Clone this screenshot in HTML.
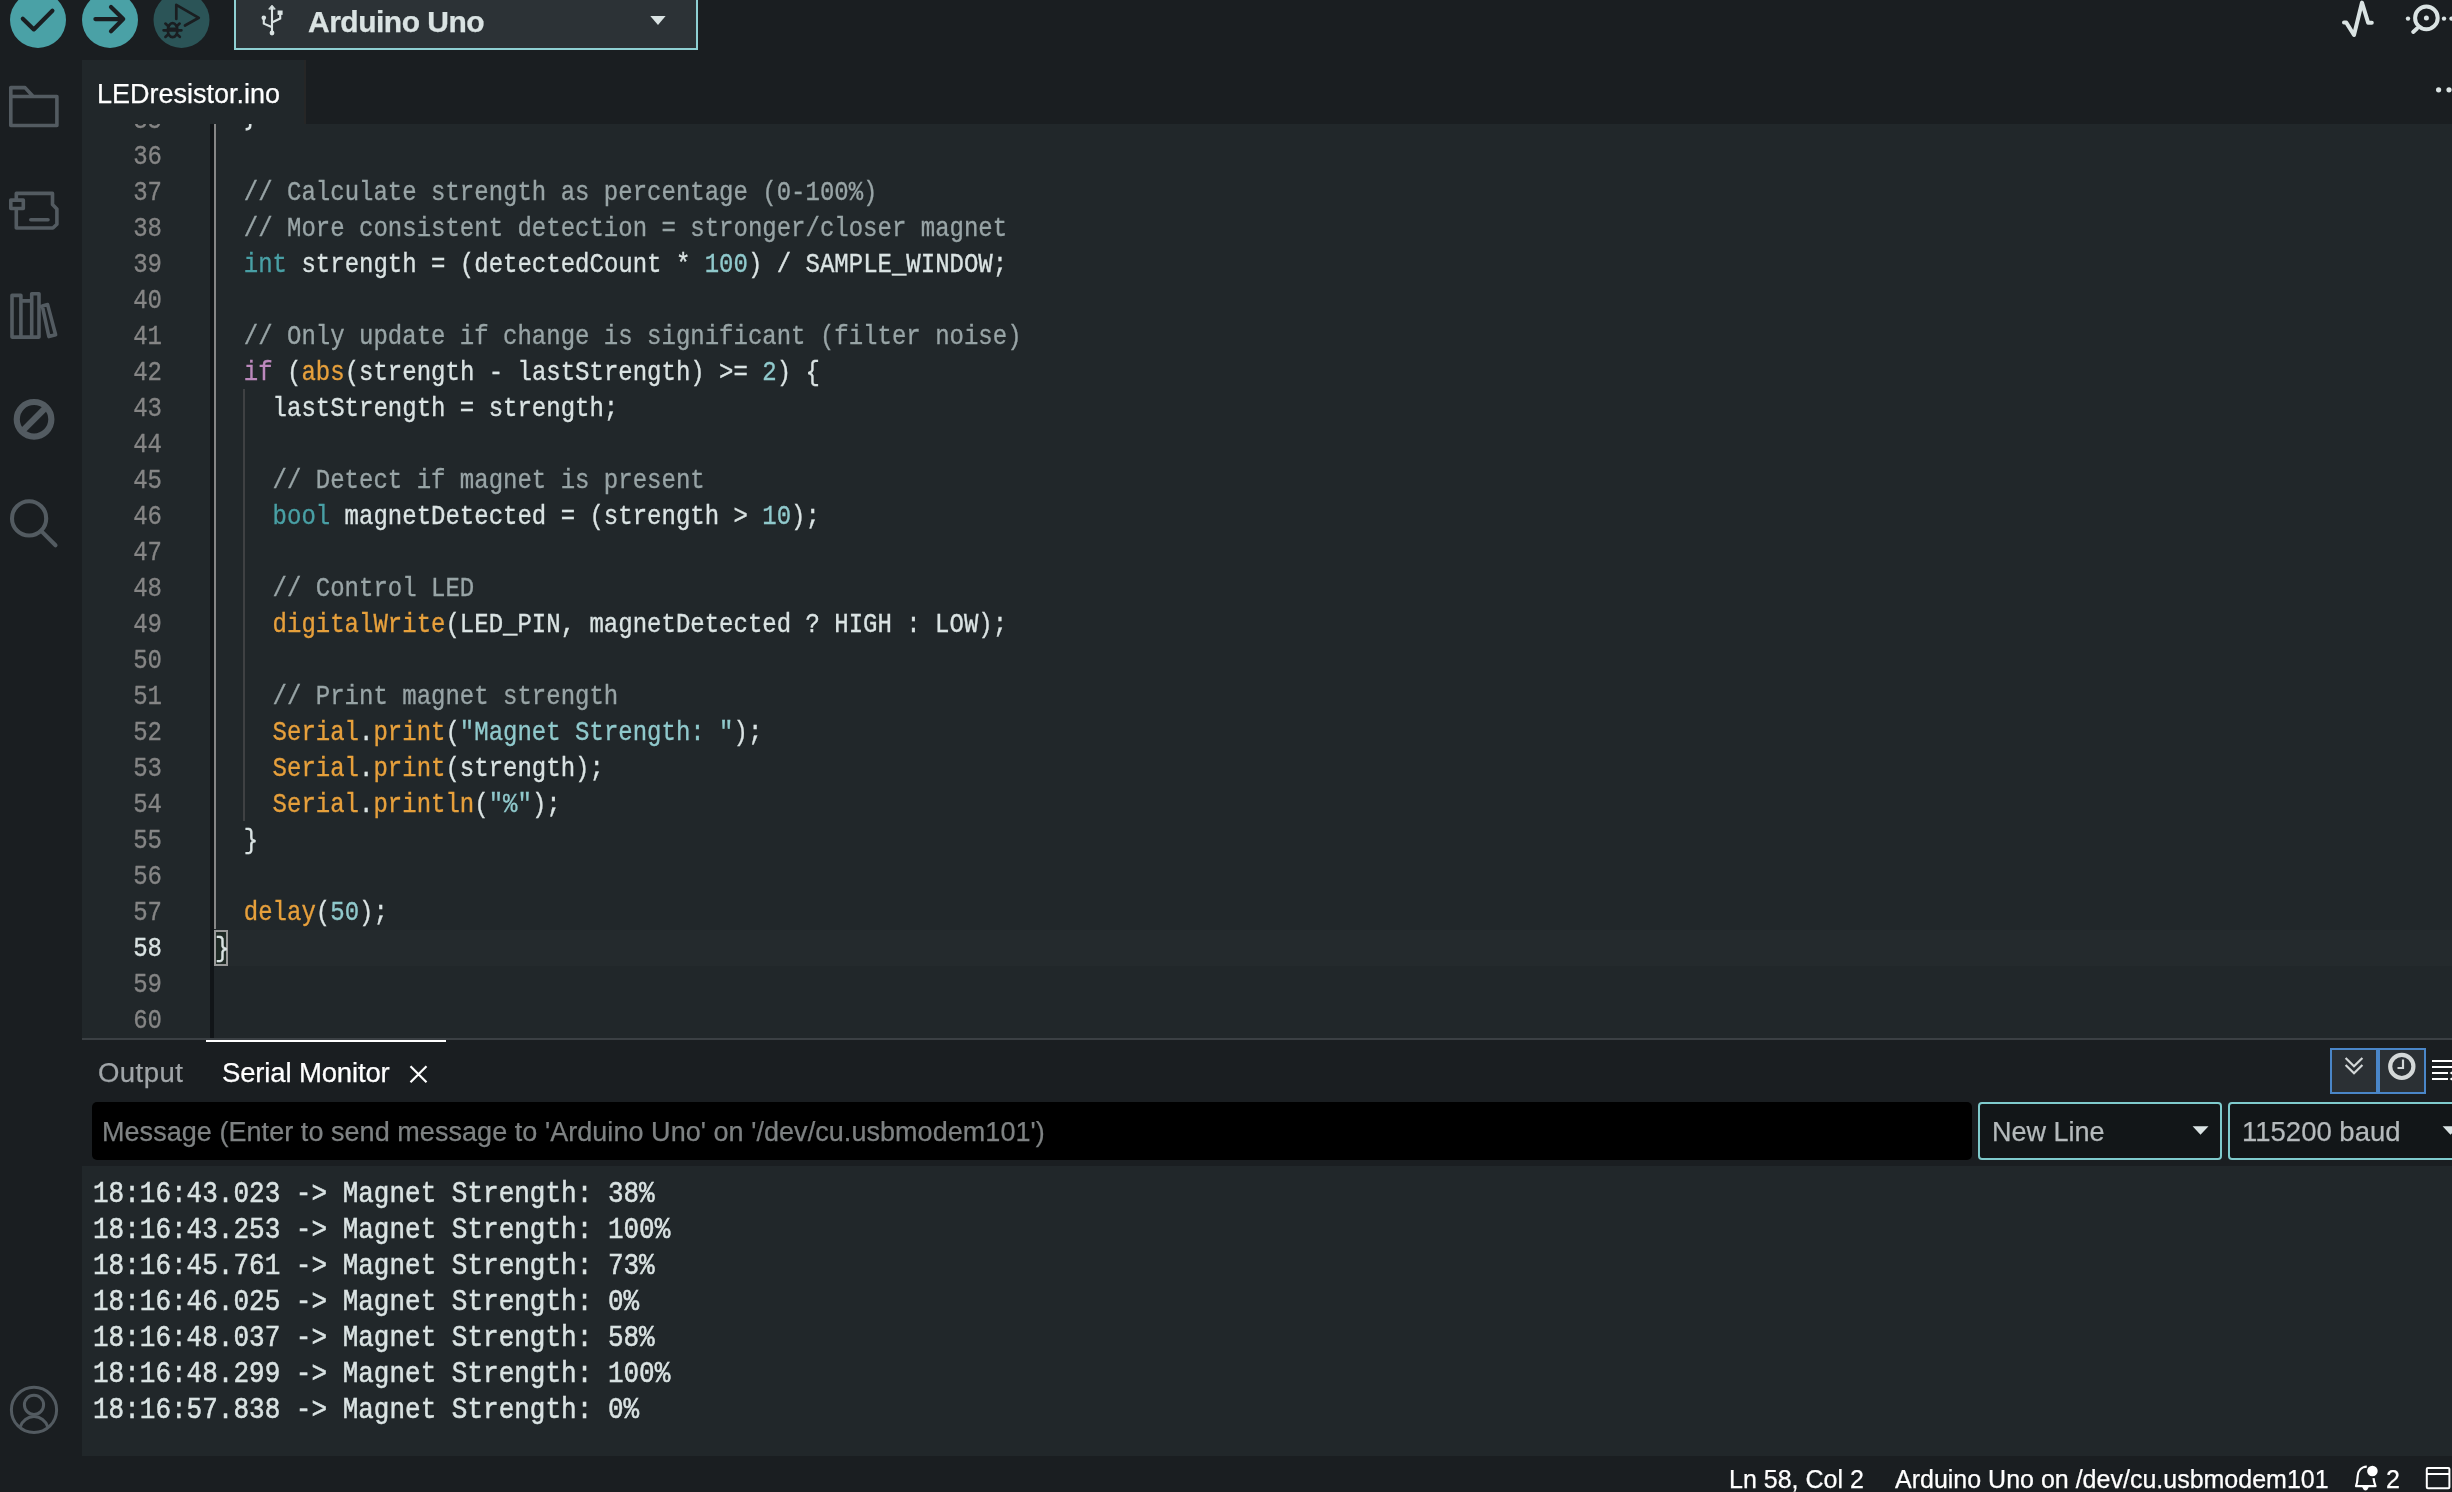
<!DOCTYPE html>
<html><head><meta charset="utf-8">
<style>
*{margin:0;padding:0;box-sizing:border-box}
html,body{width:2452px;height:1492px;overflow:hidden;background:#1a1e21;font-family:"Liberation Sans",sans-serif}
.abs{position:absolute;will-change:transform}
div.abs{-webkit-text-stroke:0.25px currentColor}
#editor{position:absolute;left:82px;top:124px;width:2370px;height:914px;background:#21272a;overflow:hidden}
.ln{position:absolute;left:0;width:80px;text-align:right;font-family:"Liberation Mono",monospace;font-size:24px;line-height:36px;color:#858585;white-space:pre;transform-origin:0 15.5px;transform:translateY(1.9px) scaleY(1.12);-webkit-text-stroke:0.3px currentColor}
.ln.act{color:#dae3e3}
.code{position:absolute;left:133px;font-family:"Liberation Mono",monospace;font-size:24px;line-height:36px;color:#dae3e3;white-space:pre;transform-origin:0 15.5px;transform:translateY(1.9px) scaleY(1.12);-webkit-text-stroke:0.3px currentColor}
.c{color:#98a4a6}.k{color:#49a0a5}.f{color:#e7a03c}.n{color:#90c9cc}.p{color:#bc89bd}.s{color:#90c9cc}
.ln,.code,.sl{will-change:transform}
#serial{position:absolute;left:82px;top:1166px;width:2370px;height:290px;background:#21272a;overflow:hidden}
.sl{position:absolute;left:11px;font-family:"Liberation Mono",monospace;font-size:26px;line-height:36px;color:#dae3e3;white-space:pre;transform-origin:0 16px;transform:translateY(0.6px) scaleY(1.15);-webkit-text-stroke:0.45px currentColor}
</style></head><body>
<!-- toolbar -->
<svg class="abs" style="left:0;top:0" width="720" height="60" viewBox="0 0 720 60">
<circle cx="38" cy="20" r="28" fill="#4aa1a6"/>
<circle cx="110" cy="20" r="28" fill="#4aa1a6"/>
<circle cx="181.5" cy="20" r="28" fill="#2b5457"/>
<g fill="none" stroke="#1a1e21" stroke-width="4.2" stroke-linecap="round" stroke-linejoin="round">
<path d="M22.8,18.8 L33.8,29.4 L52.4,10.8"/>
<path d="M95.4,19.1 H122.6 M111,7 L123.2,19.1 L111,31.2"/>
</g>
<g fill="none" stroke="#1a1e21" stroke-width="2.7" stroke-linecap="round" stroke-linejoin="round">
<path d="M176.3,19 V4.8 L198.8,17.8 L185,25.5"/>
<ellipse cx="172.6" cy="30.2" rx="4.8" ry="7"/>
<path d="M168.5,28.8 H176.7 M163.6,30.3 H181.4 M165.4,23.6 L167.8,25.8 M179.6,23.6 L177.3,25.8 M165.4,36.9 L168,34.5 M179.8,36.8 L177.2,34.5"/>
</g>
<rect x="235" y="-4" width="462" height="53" fill="#2c3236" stroke="#8fd0d3" stroke-width="2"/>
<g fill="#dae3e3" stroke="#dae3e3" stroke-width="2.1" stroke-linecap="round">
<path d="M272,33 V8.8 M263.8,17.7 V23.6 L271.6,27 M280.2,14.5 V18.5 L272.4,22.3" fill="none"/>
<path d="M269,8.8 L272,5.2 L275,8.8 Z" stroke-width="1"/>
<circle cx="272" cy="33" r="2.4" stroke="none"/>
<circle cx="263.8" cy="17.7" r="2.3" stroke="none"/>
<rect x="277.6" y="10.5" width="5" height="4.4" stroke="none"/>
</g>
<path d="M650.3,15.9 H665.6 L658,24.9 Z" fill="#dae3e3"/>
</svg>
<div class="abs" style="left:308px;top:0px;height:44px;line-height:43px;font-size:30px;letter-spacing:-0.5px;font-weight:bold;color:#dae3e3">Arduino Uno</div>
<svg class="abs" style="left:2320px;top:0" width="132" height="60" viewBox="2320 0 132 60">
<g fill="none" stroke="#dae3e3" stroke-width="4" stroke-linecap="round" stroke-linejoin="round">
<path d="M2344,22.6 H2346.3 L2354,35 L2362,2.6 L2368.2,22.8 H2371.8"/>
<circle cx="2426.4" cy="17.9" r="11.3"/>
<path d="M2413.2,32 L2417,28.6"/>
</g>
<g fill="#dae3e3">
<circle cx="2426.4" cy="17.9" r="2.5"/>
<circle cx="2408" cy="18.6" r="2.2"/>
<circle cx="2444" cy="18.6" r="2.2"/>
<circle cx="2451.5" cy="18.6" r="2.2"/>
</g>
</svg>
<!-- activity bar -->
<svg class="abs" style="left:0;top:60px" width="82" height="1396" viewBox="0 60 82 1396">
<g fill="none" stroke="#535b61" stroke-width="3.6" stroke-linejoin="round" stroke-linecap="round">
<path d="M10.8,125.5 V87.6 H25 L33.2,96.5 H56.9 V125.5 Z M10.8,96.5 H33.2"/>
<path d="M16.3,193.4 H52.5 V204.6 L56.9,209 V224.2 L52.9,228 H16.3 Z"/>
<path d="M30.8,219.8 H48"/>
<path d="M12,337.1 V295.4 H20.9 V337.1 M20.9,300.9 H31.7 V337.1 M31.7,337.1 V293.8 H39 V337.1 H12 M42.3,305.9 L47.6,304.6 L55.6,334.8 L48.9,336.6 Z"/>
<circle cx="34.05" cy="419.3" r="17.3" stroke-width="6.2"/>
<path d="M46.3,407 L21.8,431.6" stroke-width="6.2" stroke-linecap="butt"/>
<circle cx="29.1" cy="518.4" r="17.1" stroke-width="4.1"/>
<path d="M41.6,531.4 L55.5,545.3" stroke-width="4.1"/>
<circle cx="34" cy="1409.9" r="22.6" stroke-width="3"/>
<circle cx="34" cy="1404.8" r="9.6" stroke-width="3"/>
<path d="M20.3,1426.8 A14.3,14.3 0 0 1 47.7,1426.8" stroke-width="3" stroke-linecap="butt"/>
</g>
<rect x="10.8" y="200.1" width="12.5" height="8.4" fill="#1a1e21" stroke="#535b61" stroke-width="3.6" stroke-linejoin="round"/>
</svg>
<!-- tab strip -->
<div class="abs" style="left:82px;top:60px;width:224px;height:64px;background:#21272a"></div>
<div class="abs" style="left:304px;top:60px;width:2px;height:64px;background:#262626"></div>
<div class="abs" style="left:97px;top:62px;height:64px;line-height:64px;font-size:27px;color:#ffffff">LEDresistor.ino</div>
<svg class="abs" style="left:2420px;top:80px" width="32" height="20" viewBox="2420 80 32 20"><circle cx="2438.6" cy="89.8" r="2.6" fill="#dae3e3"/><circle cx="2449" cy="89.8" r="2.6" fill="#dae3e3"/></svg>

<!-- editor -->
<div id="editor">
<div class="abs" style="left:128px;top:0;width:4px;height:914px;background:#111518"></div>
<div class="abs" style="left:146px;top:806px;width:2224px;height:36px;background:rgba(255,255,255,0.015)"></div>
<div class="abs" style="left:132px;top:0;width:2px;height:805px;background:#868686"></div>
<div class="abs" style="left:161px;top:265px;width:2px;height:432px;background:#3f4143"></div>
<div class="abs" style="left:132px;top:806px;width:14px;height:36px;background:#1f2a25;border:2px solid #9a9a9a"></div>
<div class="ln" style="top:-23px">35</div>
<svg class="abs" style="left:160px;top:0" width="20" height="10" viewBox="242 124 20 10"><path d="M250.2,123 V125.8 Q250.2,129.2 245.6,129.4" fill="none" stroke="#dae3e3" stroke-width="2.6"/></svg>
<div class="ln" style="top:13px">36</div>
<div class="ln" style="top:49px">37</div>
<div class="code" style="top:49px">  <span class="c">// Calculate strength as percentage (0-100%)</span></div>
<div class="ln" style="top:85px">38</div>
<div class="code" style="top:85px">  <span class="c">// More consistent detection = stronger/closer magnet</span></div>
<div class="ln" style="top:121px">39</div>
<div class="code" style="top:121px">  <span class="k">int</span> strength = (detectedCount * <span class="n">100</span>) / SAMPLE_WINDOW;</div>
<div class="ln" style="top:157px">40</div>
<div class="ln" style="top:193px">41</div>
<div class="code" style="top:193px">  <span class="c">// Only update if change is significant (filter noise)</span></div>
<div class="ln" style="top:229px">42</div>
<div class="code" style="top:229px">  <span class="p">if</span> (<span class="f">abs</span>(strength - lastStrength) &gt;= <span class="n">2</span>) {</div>
<div class="ln" style="top:265px">43</div>
<div class="code" style="top:265px">    lastStrength = strength;</div>
<div class="ln" style="top:301px">44</div>
<div class="ln" style="top:337px">45</div>
<div class="code" style="top:337px">    <span class="c">// Detect if magnet is present</span></div>
<div class="ln" style="top:373px">46</div>
<div class="code" style="top:373px">    <span class="k">bool</span> magnetDetected = (strength &gt; <span class="n">10</span>);</div>
<div class="ln" style="top:409px">47</div>
<div class="ln" style="top:445px">48</div>
<div class="code" style="top:445px">    <span class="c">// Control LED</span></div>
<div class="ln" style="top:481px">49</div>
<div class="code" style="top:481px">    <span class="f">digitalWrite</span>(LED_PIN, magnetDetected ? HIGH : LOW);</div>
<div class="ln" style="top:517px">50</div>
<div class="ln" style="top:553px">51</div>
<div class="code" style="top:553px">    <span class="c">// Print magnet strength</span></div>
<div class="ln" style="top:589px">52</div>
<div class="code" style="top:589px">    <span class="f">Serial</span>.<span class="f">print</span>(<span class="s">"Magnet Strength: "</span>);</div>
<div class="ln" style="top:625px">53</div>
<div class="code" style="top:625px">    <span class="f">Serial</span>.<span class="f">print</span>(strength);</div>
<div class="ln" style="top:661px">54</div>
<div class="code" style="top:661px">    <span class="f">Serial</span>.<span class="f">println</span>(<span class="s">"%"</span>);</div>
<div class="ln" style="top:697px">55</div>
<div class="code" style="top:697px">  }</div>
<div class="ln" style="top:733px">56</div>
<div class="ln" style="top:769px">57</div>
<div class="code" style="top:769px">  <span class="f">delay</span>(<span class="n">50</span>);</div>
<div class="ln act" style="top:805px">58</div>
<div class="code" style="top:805px">}</div>
<div class="ln" style="top:841px">59</div>
<div class="ln" style="top:877px">60</div>
</div>
<div class="abs" style="left:82px;top:1038px;width:2370px;height:2px;background:#3b4044"></div>
<div class="abs" style="left:206px;top:1040px;width:240px;height:2px;background:#ffffff"></div>

<!-- panel -->
<div class="abs" style="left:98px;top:1050px;height:46px;line-height:46px;font-size:27.5px;letter-spacing:0.45px;color:#a0a5a8">Output</div>
<div class="abs" style="left:222px;top:1050px;height:46px;line-height:46px;font-size:27.5px;letter-spacing:-0.15px;color:#ffffff">Serial Monitor</div>
<svg class="abs" style="left:0;top:1040px" width="2452" height="126" viewBox="0 1040 2452 126">
<path d="M410.5,1066.2 L426.5,1082.2 M426.5,1066.2 L410.5,1082.2" stroke="#ffffff" stroke-width="2.2" fill="none"/>
<rect x="2331" y="1049" width="94" height="44" fill="#2b3034" stroke="#4a86c8" stroke-width="2"/>
<rect x="2377" y="1049" width="2" height="44" fill="#4a86c8"/>
<rect x="2376" y="1049" width="4" height="44" fill="#4a86c8"/>
<g fill="none" stroke="#d4d8d8" stroke-width="2.2" stroke-linecap="butt">
<path d="M2345.6,1058 L2354,1066.3 L2362.4,1058 M2345.6,1065 L2354,1073.3 L2362.4,1065"/>
</g>
<circle cx="2401.8" cy="1066.4" r="11.6" fill="none" stroke="#d4d8d8" stroke-width="4.2"/>
<path d="M2403,1059.5 V1068 H2397.5" fill="none" stroke="#d4d8d8" stroke-width="2.2"/>
<g stroke="#ffffff" stroke-width="2.2">
<path d="M2432,1061 H2452 M2432,1067 H2452 M2432,1073 H2448 M2432,1079 H2448"/>
</g>
<path d="M2452,1071.5 L2449.5,1073 L2452,1074.5 M2452,1077.5 L2449.5,1079 L2452,1080.5" fill="#ffffff"/>
</svg>
<div class="abs" style="left:92px;top:1102px;width:1880px;height:58px;background:#000;border-radius:5px"></div>
<div class="abs" style="left:102px;top:1102px;height:58px;line-height:60px;font-size:27px;letter-spacing:0.05px;color:#7e8283">Message (Enter to send message to 'Arduino Uno' on '/dev/cu.usbmodem101')</div>
<div class="abs" style="left:1978px;top:1102px;width:244px;height:58px;background:#121618;border:2px solid #7fcbcd;border-radius:4px"></div>
<div class="abs" style="left:2228px;top:1102px;width:240px;height:58px;background:#121618;border:2px solid #7fcbcd;border-radius:4px"></div>
<div class="abs" style="left:1992px;top:1102px;height:58px;line-height:60px;font-size:27px;color:#b5babc">New Line</div>
<div class="abs" style="left:2242px;top:1102px;height:58px;line-height:60px;font-size:27.5px;color:#b5babc">115200 baud</div>
<svg class="abs" style="left:2180px;top:1120px" width="272" height="20" viewBox="2180 1120 272 20">
<path d="M2192.6,1126.2 H2208.5 L2200.5,1134.8 Z M2442.6,1126.2 H2458.5 L2450.5,1134.8 Z" fill="#dae3e3"/>
</svg>

<div id="serial">
<div class="sl" style="top:9px">18:16:43.023 -&gt; Magnet Strength: 38%</div>
<div class="sl" style="top:45px">18:16:43.253 -&gt; Magnet Strength: 100%</div>
<div class="sl" style="top:81px">18:16:45.761 -&gt; Magnet Strength: 73%</div>
<div class="sl" style="top:117px">18:16:46.025 -&gt; Magnet Strength: 0%</div>
<div class="sl" style="top:153px">18:16:48.037 -&gt; Magnet Strength: 58%</div>
<div class="sl" style="top:189px">18:16:48.299 -&gt; Magnet Strength: 100%</div>
<div class="sl" style="top:225px">18:16:57.838 -&gt; Magnet Strength: 0%</div>
</div>

<!-- status bar -->
<div class="abs" style="left:1729px;top:1457px;height:36px;line-height:44px;font-size:25px;color:#ffffff">Ln 58, Col 2</div>
<div class="abs" style="left:1895px;top:1457px;height:36px;line-height:44px;font-size:25px;color:#ffffff">Arduino Uno on /dev/cu.usbmodem101</div>
<div class="abs" style="left:2386px;top:1457px;height:36px;line-height:44px;font-size:25px;color:#ffffff">2</div>
<svg class="abs" style="left:2340px;top:1456px" width="112" height="36" viewBox="2340 1456 112 36">
<path d="M2366.8,1466.6 C2361,1466.8 2358,1471 2357.7,1476 C2357.5,1481 2357.2,1483 2356,1486.2 H2375.5 C2374.3,1483 2373.8,1481 2373.5,1478.2" fill="none" stroke="#ffffff" stroke-width="2.2" stroke-linejoin="round"/>
<path d="M2362.2,1487 H2368.8 L2367.5,1489.5 Q2365.5,1491.5 2363.5,1489.5 Z" fill="#ffffff"/>
<circle cx="2372.4" cy="1471" r="5.3" fill="#ffffff"/>
<rect x="2426.8" y="1468" width="22.6" height="20.2" rx="1" fill="none" stroke="#ffffff" stroke-width="2"/>
<path d="M2426.8,1474 H2449.4" stroke="#ffffff" stroke-width="2"/>
</svg>
</body></html>
